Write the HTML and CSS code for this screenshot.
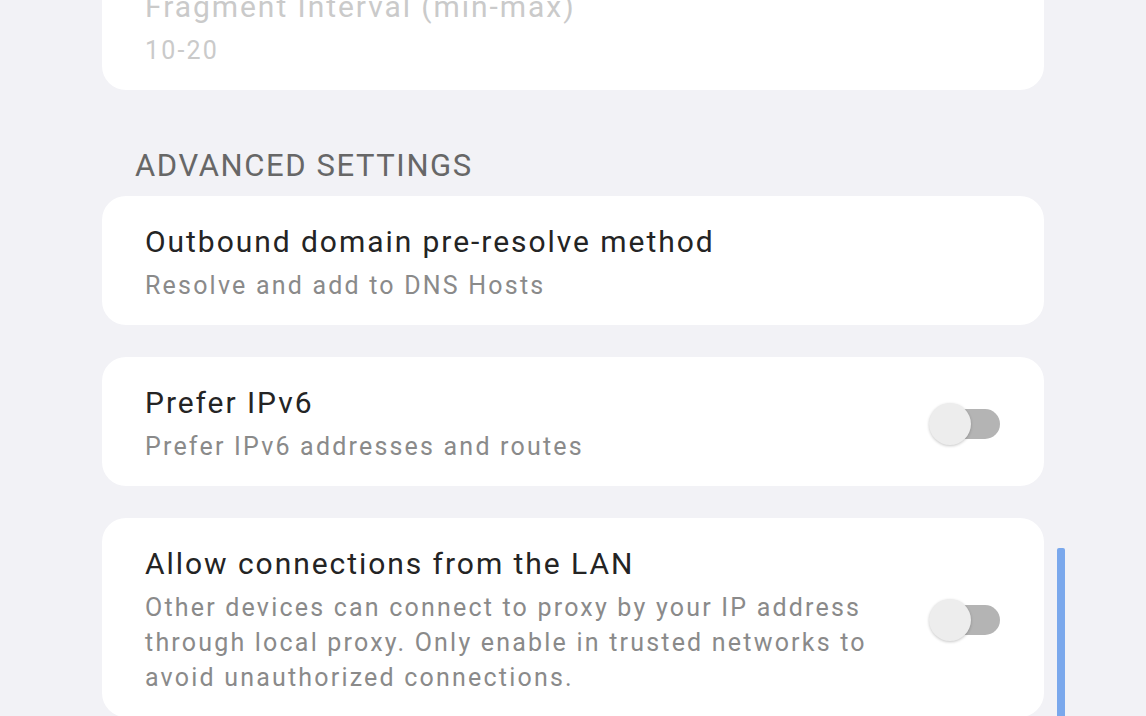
FILE: index.html
```html
<!DOCTYPE html>
<html>
<head>
<meta charset="utf-8">
<link rel="stylesheet" href="styles.css">
</head>
<body>
<div class="screen">
  <div class="list">
    <div class="card disabled">
      <div class="text">
        <div class="title">Fragment Interval (min-max)</div>
        <div class="sub">10-20</div>
      </div>
    </div>

    <div class="section">ADVANCED SETTINGS</div>

    <div class="card">
      <div class="text">
        <div class="title">Outbound domain pre-resolve method</div>
        <div class="sub">Resolve and add to DNS Hosts</div>
      </div>
    </div>

    <div class="card">
      <div class="text">
        <div class="title">Prefer IPv6</div>
        <div class="sub">Prefer IPv6 addresses and routes</div>
      </div>
      <div class="switch"><span class="thumb"></span></div>
    </div>

    <div class="card">
      <div class="text narrow">
        <div class="title">Allow connections from the LAN</div>
        <div class="sub">Other devices can connect to proxy by your IP address through local proxy. Only enable in trusted networks to avoid unauthorized connections.</div>
      </div>
      <div class="switch"><span class="thumb"></span></div>
    </div>
  </div>
  <div class="scrollbar"></div>
</div>
</body>
</html>
```

FILE: styles.css
```css
html, body {
  margin: 0;
  padding: 0;
  background: #f2f2f6;
  font-family: Roboto, "Noto Sans", sans-serif;
}
.screen {
  position: relative;
  width: 1146px;
  height: 716px;
  overflow: hidden;
}
.list {
  margin-top: -39px;
  padding: 0 102px;
  display: flex;
  flex-direction: column;
  gap: 32px;
}
.card {
  background: #ffffff;
  border-radius: 24px;
  padding: 27px 44px 22px 43px;
  display: flex;
  align-items: center;
  justify-content: space-between;
}
.text { display: flex; flex-direction: column; }
.narrow { width: 728px; }
.title {
  font-size: 30px;
  line-height: 38px;
  letter-spacing: 1.95px;
  color: #242424;
}
.sub {
  font-size: 25px;
  line-height: 35px;
  letter-spacing: 2.2px;
  color: #8a8a8a;
  margin-top: 7px;
}
.disabled .title, .disabled .sub { color: #cacaca; }
.section {
  font-size: 31px;
  line-height: 40px;
  letter-spacing: 1.6px;
  color: #676767;
  padding-left: 33px;
  margin: 24px 0 -22px;
}
.switch {
  position: relative;
  width: 70px;
  height: 30px;
  background: #b4b4b4;
  border-radius: 15px;
  flex-shrink: 0;
}
.thumb {
  position: absolute;
  left: -1px;
  top: -6px;
  width: 42px;
  height: 42px;
  border-radius: 50%;
  background: #ededed;
  box-shadow: 0 1px 3px rgba(0,0,0,0.22);
}
.scrollbar {
  position: absolute;
  left: 1057px;
  top: 548px;
  width: 8px;
  height: 200px;
  background: #7aa8ec;
  border-radius: 2px;
}
```
